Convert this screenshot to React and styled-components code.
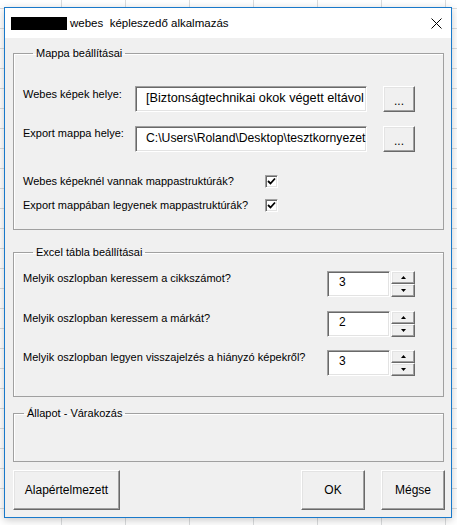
import React from "react";
import styled, { createGlobalStyle } from "styled-components";

const GlobalStyle = createGlobalStyle`
  html, body {
    margin: 0;
    padding: 0;
  }
  body {
    background-color: #ffffff;
    background-image:
      linear-gradient(to right, #dadcdd 1px, transparent 1px),
      linear-gradient(to bottom, #dadcdd 1px, transparent 1px);
    background-size: 64px 20px;
    background-position: 61px 8px;
    font-family: "Liberation Sans", Arial, sans-serif;
  }
`;

const Desktop = styled.div`
  min-height: 525px;
  padding: 7px 0 0 4px;
  box-sizing: border-box;
`;

const Window = styled.div`
  width: 448px;
  height: 511px;
  box-sizing: border-box;
  border: 1px solid #1979ca;
  background: #f0f0f0;
  display: flex;
  flex-direction: column;
  box-shadow: 0 2px 8px rgba(0, 0, 0, 0.22);
`;

const TitleBar = styled.div`
  height: 30px;
  flex: none;
  background: #ffffff;
  display: flex;
  align-items: center;
  padding-left: 6px;
`;

const Redacted = styled.span`
  width: 56px;
  height: 13px;
  background: #000;
  margin-right: 3px;
  margin-top: 1px;
`;

const TitleText = styled.span`
  font-size: 11.5px;
  color: #000;
  white-space: pre;
`;

const Close = styled.svg`
  margin-left: auto;
  margin-right: 9px;
  margin-top: 1px;
`;

const Body = styled.div`
  flex: 1;
  display: flex;
  flex-direction: column;
  padding: 0 7px 7px 8px;
`;

const Group = styled.fieldset`
  box-sizing: border-box;
  margin: ${(p) => p.$top}px 0 0 0;
  padding: ${(p) => p.$pad};
  border: 1px solid #a0a0a0;
  box-shadow: inset 1px 1px #fff;
  height: ${(p) => (p.$h ? `${p.$h}px` : "auto")};
  min-width: 0;
  font-size: 11px;
`;

const Legend = styled.legend`
  margin-left: 10px;
  padding: 0 3px;
  font-size: 11px;
  line-height: 13px;
  color: #000;
`;

const PathRow = styled.div`
  display: flex;
  align-items: flex-start;
  height: 26px;
  margin-top: ${(p) => p.$top || 0}px;
`;

const Label = styled.div`
  width: ${(p) => (p.$w ? `${p.$w}px` : "auto")};
  flex: ${(p) => (p.$w ? "none" : 1)};
  font-size: 11px;
  line-height: 13px;
  padding-top: ${(p) => p.$pt || 0}px;
  color: #000;
  white-space: nowrap;
`;

const Sunken = styled.div`
  box-sizing: border-box;
  height: 26px;
  width: ${(p) => p.$w}px;
  background: #fff;
  border: 1px solid;
  border-color: #a0a0a0 #ffffff #ffffff #a0a0a0;
  box-shadow: inset 1px 1px #696969, inset -1px -1px #e3e3e3;
  padding: ${(p) => p.$pt || 4}px 0 0 ${(p) => p.$pl || 11}px;
  font-size: ${(p) => p.$fs || 12}px;
  line-height: 15px;
  color: #000;
  white-space: nowrap;
  overflow: hidden;
`;

const Raised = styled.button`
  box-sizing: border-box;
  width: ${(p) => p.$w}px;
  height: ${(p) => p.$h}px;
  margin: 0 0 0 ${(p) => p.$ml || 0}px;
  padding: 0;
  background: #f0f0f0;
  border: 1px solid;
  border-color: #ffffff #696969 #696969 #ffffff;
  box-shadow: inset -1px -1px #a0a0a0, inset 1px 1px #e3e3e3;
  font-family: "Liberation Sans", Arial, sans-serif;
  font-size: 12px;
  color: #000;
  display: flex;
  align-items: center;
  justify-content: center;
`;

const BrowseButton = styled(Raised)`
  padding-top: 3px;
`;

const CheckRow = styled.div`
  display: flex;
  align-items: center;
  height: 13px;
  margin-top: ${(p) => p.$top}px;
`;

const CheckBox = styled.span`
  box-sizing: border-box;
  width: 13px;
  height: 13px;
  background: #fff;
  border: 1px solid;
  border-color: #a0a0a0 #ffffff #ffffff #a0a0a0;
  box-shadow: inset 1px 1px #696969, inset -1px -1px #e3e3e3;
  display: flex;
  align-items: center;
  justify-content: center;
`;

const SpinRow = styled.div`
  display: flex;
  align-items: flex-start;
  margin-top: ${(p) => p.$top || 0}px;
`;

const Spinner = styled.div`
  display: flex;
  flex-direction: column;
  margin-left: 1px;
`;

const ButtonBar = styled.div`
  display: flex;
  margin-top: 8px;
  margin-right: -1px;
`;

const Spacer = styled.div`
  flex: 1;
`;

const Check = () => (
  <CheckBox>
    <svg width="9" height="9" viewBox="0 0 9 9">
      <path d="M1 4 L3.5 6.5 L8 1.5" fill="none" stroke="#000" strokeWidth="1.8" />
    </svg>
  </CheckBox>
);

const Arrow = ({ up }) => (
  <svg width="5" height="3" viewBox="0 0 5 3">
    <path d={up ? "M2.5 0 L5 3 L0 3 Z" : "M0 0 L5 0 L2.5 3 Z"} fill="#000" />
  </svg>
);

const SpinField = ({ label, value, top }) => (
  <SpinRow $top={top}>
    <Label $pt={1}>{label}</Label>
    <Sunken $w={63} $pt={3}>{value}</Sunken>
    <Spinner>
      <Raised $w={24} $h={13}>
        <Arrow up />
      </Raised>
      <Raised $w={24} $h={13}>
        <Arrow />
      </Raised>
    </Spinner>
  </SpinRow>
);

export default function App() {
  return (
    <>
      <GlobalStyle />
      <Desktop>
        <Window>
          <TitleBar>
            <Redacted />
            <TitleText>webes  képleszedő alkalmazás</TitleText>
            <Close width="11" height="11" viewBox="0 0 11 11">
              <path d="M0.5 0.5 L10.5 10.5 M10.5 0.5 L0.5 10.5" stroke="#000" strokeWidth="1" />
            </Close>
          </TitleBar>
          <Body>
            <Group $top={9} $pad="26px 28px 17px 9px">
              <Legend>Mappa beállításai</Legend>
              <PathRow>
                <Label $w={112} $pt={2}>Webes képek helye:</Label>
                <Sunken $w={232} $fs={12.7} $pl={10}>[Biztonságtechnikai okok végett eltávol</Sunken>
                <BrowseButton $w={32} $h={26} $ml={16}>...</BrowseButton>
              </PathRow>
              <PathRow $top={14}>
                <Label $w={112} $pt={1}>Export mappa helye:</Label>
                <Sunken $w={232} $fs={12.2} $pl={10}>C:\Users\Roland\Desktop\tesztkornyezet</Sunken>
                <BrowseButton $w={32} $h={26} $ml={16}>...</BrowseButton>
              </PathRow>
              <CheckRow $top={23}>
                <Label $w={242}>Webes képeknél vannak mappastruktúrák?</Label>
                <Check />
              </CheckRow>
              <CheckRow $top={11}>
                <Label $w={242}>Export mappában legyenek mappastruktúrák?</Label>
                <Check />
              </CheckRow>
            </Group>
            <Group $top={16} $pad="12px 28px 20px 9px">
              <Legend>Excel tábla beállításai</Legend>
              <SpinField label="Melyik oszlopban keressem a cikkszámot?" value="3" />
              <SpinField label="Melyik oszlopban keressem a márkát?" value="2" top={14} />
              <SpinField label="Melyik oszlopban legyen visszajelzés a hiányzó képekről?" value="3" top={13} />
            </Group>
            <Group $top={10} $pad="0" $h={55}>
              <Legend>Állapot - Várakozás</Legend>
            </Group>
            <ButtonBar>
              <Raised $w={107} $h={40}>Alapértelmezett</Raised>
              <Spacer />
              <Raised $w={64} $h={40}>OK</Raised>
              <Raised $w={64} $h={40} $ml={16}>Mégse</Raised>
            </ButtonBar>
          </Body>
        </Window>
      </Desktop>
    </>
  );
}
